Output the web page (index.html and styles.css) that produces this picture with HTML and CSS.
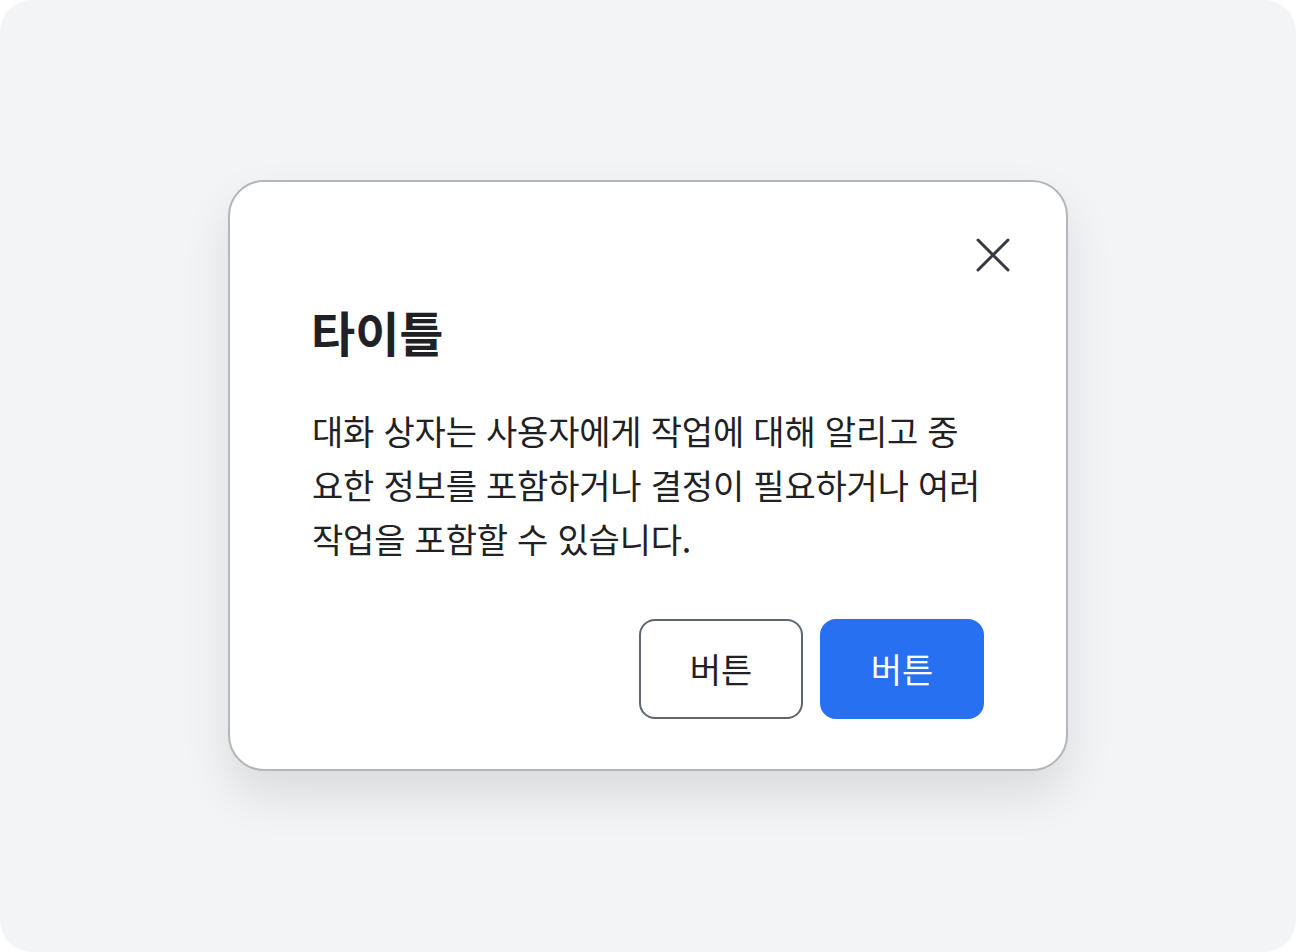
FILE: index.html
```html
<!DOCTYPE html>
<html lang="ko">
<head>
<meta charset="utf-8">
<title>Dialog</title>
<link rel="stylesheet" href="styles.css">
</head>
<body>
<div class="stage">
  <div class="dialog" role="dialog" aria-labelledby="dlg-title">
    <div class="dialog-top">
      <button class="close" aria-label="닫기">
        <svg width="34" height="34" viewBox="0 0 34 34" fill="none" stroke="#373a40" stroke-width="3" stroke-linecap="round">
          <path d="M2 2 L32 32 M32 2 L2 32"/>
        </svg>
      </button>
    </div>
    <div class="dialog-body">
      <h2 class="title" id="dlg-title">타이틀</h2>
      <p class="desc">대화 상자는 사용자에게 작업에 대해 알리고 중요한 정보를 포함하거나 결정이 필요하거나 여러 작업을 포함할 수 있습니다.</p>
      <div class="actions">
        <button class="btn btn-outline">버튼</button>
        <button class="btn btn-primary">버튼</button>
      </div>
    </div>
  </div>
</div>
</body>
</html>
```

FILE: styles.css
```css
html, body {
  margin: 0;
  padding: 0;
  background: #ffffff;
}
body {
  font-family: "Noto Sans CJK KR", "Noto Sans", sans-serif;
  color: #1f2124;
}
.stage {
  width: 1296px;
  height: 952px;
  background: #f3f4f6;
  border-radius: 32px;
  display: flex;
  align-items: flex-start;
  justify-content: center;
  box-sizing: border-box;
  padding-top: 180px;
}
.dialog {
  width: 840px;
  box-sizing: border-box;
  background: #ffffff;
  border: 2px solid #b3b7bd;
  border-radius: 36px;
  box-shadow: 0 24px 48px rgba(0, 0, 0, 0.10);
}
.dialog-top {
  display: flex;
  justify-content: flex-end;
  padding: 56px 56px 0 0;
}
.close {
  width: 34px;
  height: 34px;
  padding: 0;
  border: 0;
  background: none;
  display: block;
  cursor: pointer;
}
.close svg { display: block; }
.dialog-body {
  padding: 31px 82px 50px 83px;
}
.title {
  margin: 0 0 0 -2px;
  font-size: 48px;
  font-weight: 700;
  line-height: 57px;
  color: #1f2124;
}
.desc {
  margin: 44px -3px 0 -1px;
  font-size: 34px;
  line-height: 54px;
  letter-spacing: -0.2px;
  font-weight: 400;
  color: #1f2124;
}
.actions {
  display: flex;
  justify-content: flex-end;
  gap: 17px;
  margin-top: 53px;
}
.btn {
  width: 164px;
  height: 100px;
  box-sizing: border-box;
  border-radius: 16px;
  font-family: "Noto Sans CJK KR", "Noto Sans", sans-serif;
  font-size: 34px;
  line-height: 1;
  padding: 0;
  display: flex;
  align-items: center;
  justify-content: center;
}
.btn-outline {
  background: #ffffff;
  border: 2px solid #5f6670;
  color: #1f2124;
}
.btn-primary {
  background: #2870f2;
  border: 2px solid #2870f2;
  color: #ffffff;
}
```
